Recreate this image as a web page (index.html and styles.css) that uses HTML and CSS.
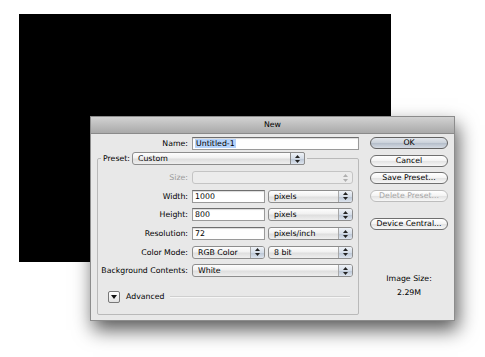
FILE: index.html
```html
<!DOCTYPE html>
<html lang="en">
<head>
<meta charset="UTF-8" />
<meta name="viewport" content="width=device-width, initial-scale=1.0">
<title>New</title>
<link rel="stylesheet" href="styles.css">
</head>
<body>

<div class="scene">
  <div class="canvas"></div>

  <div class="dialog">
    <div class="titlebar">New</div>
    <div class="dialog-body">

      <div class="form">
        <div class="name-row">
          <span class="lbl">Name:</span>
          <div class="field"><span class="selected">Untitled-1</span></div>
        </div>

        <fieldset class="preset">
          <legend>
            <span class="lbl">Preset:</span>
            <div class="popup preset-pop">Custom<span class="stepper"><svg width="5" height="8" viewBox="0 0 5 8"><polygon points="0,3 2.5,0 5,3"/><polygon points="0,5 2.5,8 5,5"/></svg></span></div>
          </legend>

          <div class="rows">
            <span class="lbl off">Size:</span>
            <div class="popup off"><span class="stepper"><svg width="5" height="8" viewBox="0 0 5 8"><polygon points="0,3 2.5,0 5,3"/><polygon points="0,5 2.5,8 5,5"/></svg></span></div>

            <span class="lbl">Width:</span>
            <div class="pair">
              <div class="field">1000</div>
              <div class="popup">pixels<span class="stepper"><svg width="5" height="8" viewBox="0 0 5 8"><polygon points="0,3 2.5,0 5,3"/><polygon points="0,5 2.5,8 5,5"/></svg></span></div>
            </div>

            <span class="lbl">Height:</span>
            <div class="pair">
              <div class="field">800</div>
              <div class="popup">pixels<span class="stepper"><svg width="5" height="8" viewBox="0 0 5 8"><polygon points="0,3 2.5,0 5,3"/><polygon points="0,5 2.5,8 5,5"/></svg></span></div>
            </div>

            <span class="lbl">Resolution:</span>
            <div class="pair">
              <div class="field">72</div>
              <div class="popup">pixels/inch<span class="stepper"><svg width="5" height="8" viewBox="0 0 5 8"><polygon points="0,3 2.5,0 5,3"/><polygon points="0,5 2.5,8 5,5"/></svg></span></div>
            </div>

            <span class="lbl">Color Mode:</span>
            <div class="pair">
              <div class="popup">RGB Color<span class="stepper"><svg width="5" height="8" viewBox="0 0 5 8"><polygon points="0,3 2.5,0 5,3"/><polygon points="0,5 2.5,8 5,5"/></svg></span></div>
              <div class="popup">8 bit<span class="stepper"><svg width="5" height="8" viewBox="0 0 5 8"><polygon points="0,3 2.5,0 5,3"/><polygon points="0,5 2.5,8 5,5"/></svg></span></div>
            </div>

            <span class="lbl">Background Contents:</span>
            <div class="popup">White<span class="stepper"><svg width="5" height="8" viewBox="0 0 5 8"><polygon points="0,3 2.5,0 5,3"/><polygon points="0,5 2.5,8 5,5"/></svg></span></div>
          </div>

          <div class="advanced">
            <span class="disclosure"><svg width="6" height="4" viewBox="0 0 6 4"><polygon points="0,0 6,0 3,4"/></svg></span>
            <span>Advanced</span>
            <span class="rule"></span>
          </div>
        </fieldset>
      </div>

      <div class="side">
        <div class="btn default">OK</div>
        <div class="btn">Cancel</div>
        <div class="btn">Save Preset...</div>
        <div class="btn off">Delete Preset...</div>
        <div class="btn central">Device Central...</div>
        <div class="size-info">
          <p>Image Size:</p>
          <p>2.29M</p>
        </div>
      </div>

    </div>
  </div>
</div>

</body>
</html>
```

FILE: styles.css
```css
body {
  margin: 0;
  background: #fff;
  font-family: "DejaVu Sans", sans-serif;
  font-size: 7.8px;
  color: #000;
}
.scene {
  padding: 14px 0 0 19px;
}
.canvas {
  width: 372px;
  height: 248px;
  background: #000;
}

/* dialog window */
.dialog {
  position: absolute;
  left: 90px;
  top: 116px;
  width: 365px;
  height: 205px;
  box-sizing: border-box;
  border: 1px solid #8c8c8c;
  background: #e8e8e8;
  box-shadow: 3px 9px 18px rgba(0,0,0,0.65);
}
.titlebar {
  height: 16px;
  line-height: 16px;
  text-align: center;
  background: linear-gradient(#d2d2d2, #a9a9a9);
  border-bottom: 1px solid #8a8a8a;
}
.dialog-body {
  display: flex;
  padding-top: 3px;
}
.form {
  width: 268px;
}
.lbl {
  text-align: right;
  line-height: 13px;
  white-space: nowrap;
}
.lbl.off { color: #9a9a9a; }

.name-row {
  display: grid;
  grid-template-columns: 97px 167px;
  column-gap: 4px;
}

/* inputs and popups */
.field {
  height: 13px;
  box-sizing: border-box;
  background: #fff;
  border: 1px solid #9a9a9a;
  border-top-color: #6e6e6e;
  box-shadow: inset 0 1px 1px rgba(0,0,0,0.15);
  padding-left: 2px;
  line-height: 11px;
}
.selected {
  background: #b6d3fb;
  padding: 0 1px;
}
.popup {
  position: relative;
  height: 13px;
  box-sizing: border-box;
  border: 1px solid #8d8d8d;
  border-radius: 3px;
  background: linear-gradient(#fdfdfd, #f1f1f1 45%, #dedede 55%, #efefef);
  padding-left: 5px;
  line-height: 11px;
  white-space: nowrap;
}
.stepper {
  position: absolute;
  right: 0;
  top: 0;
  bottom: 0;
  width: 13px;
  display: flex;
  align-items: center;
  justify-content: center;
  border-left: 1px solid #a8a8a8;
  border-radius: 0 2px 2px 0;
  background: linear-gradient(#eef2f7, #d5dde8 50%, #bcc7d6 55%, #dde4ee);
}
.stepper svg { fill: #222; }
.popup.off {
  border-color: #c4c4c4;
  background: #ececec;
}
.popup.off .stepper {
  border-left: none;
  background: none;
}
.popup.off .stepper svg { fill: #b0b0b0; }

/* preset group */
.preset {
  margin: 2px 0 0 6px;
  width: 262px;
  box-sizing: border-box;
  border: 1px solid #b9b9b9;
  border-radius: 2px;
  padding: 0 0 11px 0;
}
.preset legend {
  display: flex;
  align-items: center;
  gap: 2px;
  padding: 0 2px;
  margin-left: 3px;
}
.preset-pop {
  width: 173px;
}
.preset-pop .stepper {
  border: 1px solid #8d8d8d;
  top: -1px;
  bottom: -1px;
  right: -1px;
}
.rows {
  display: grid;
  grid-template-columns: 90px 161px;
  column-gap: 4px;
  row-gap: 5.7px;
  padding-top: 6px;
}
.pair {
  display: grid;
  grid-template-columns: 73px 85px;
  column-gap: 3px;
}
.advanced {
  display: flex;
  align-items: center;
  margin-top: 13.5px;
  padding-left: 10px;
  height: 12px;
}
.disclosure {
  width: 12px;
  height: 12px;
  box-sizing: border-box;
  border: 1px solid #777;
  border-radius: 2px;
  background: linear-gradient(#fff, #e2e2e2);
  display: flex;
  align-items: center;
  justify-content: center;
  margin-right: 6px;
}
.disclosure svg { fill: #111; }
.rule {
  flex: 1;
  margin: 0 8px 0 5px;
  border-top: 1px solid #cfcfcf;
  border-bottom: 1px solid #f6f6f6;
}

/* right column */
.side {
  margin-left: 11px;
  width: 78px;
  display: flex;
  flex-direction: column;
  gap: 5.5px;
}
.btn {
  height: 12px;
  box-sizing: border-box;
  border: 1px solid #6f6f6f;
  border-radius: 7px;
  background: linear-gradient(#fff, #f3f3f3 50%, #e4e4e4 55%, #f7f7f7);
  text-align: center;
  line-height: 10px;
}
.btn.default {
  background: linear-gradient(#e3e7ec, #c9d0d9 50%, #b6bfcb 55%, #d5dbe3);
  border-color: #626262;
}
.btn.off {
  color: #a5a5a5;
  border-color: #bdbdbd;
}
.btn.central {
  margin-top: 10.5px;
}
.size-info {
  margin-top: 39px;
  text-align: center;
}
.size-info p {
  margin: 0 0 5px;
  line-height: 9px;
}
```
